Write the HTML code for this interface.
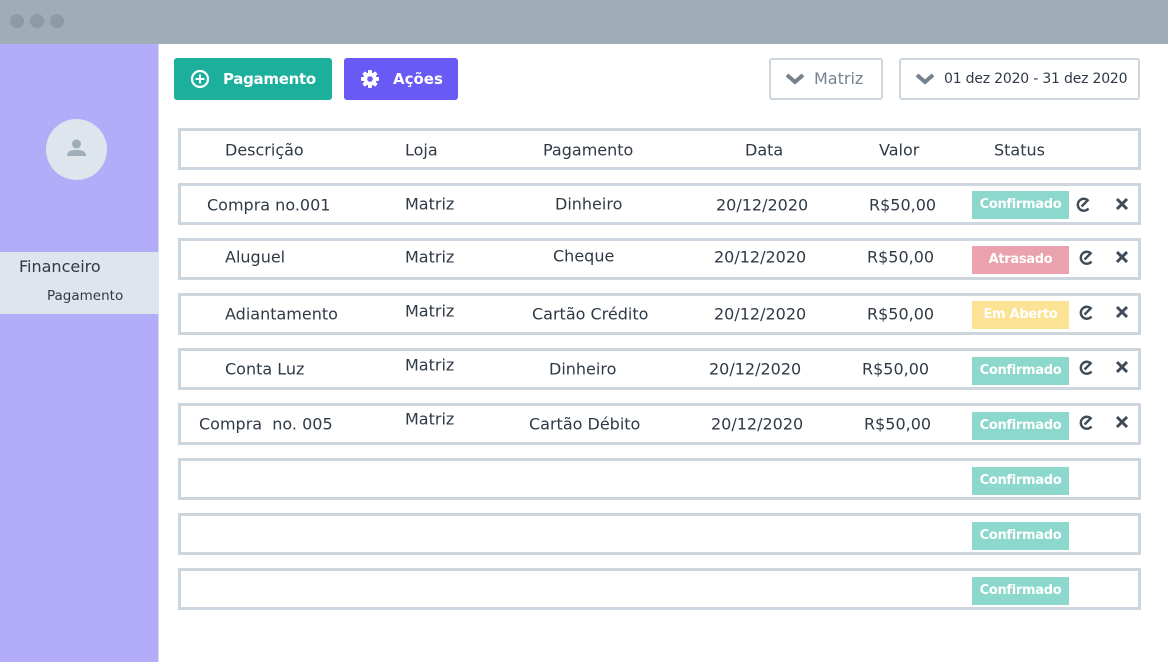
<!DOCTYPE html>
<html><head><meta charset="utf-8"><style>
*{margin:0;padding:0;box-sizing:border-box}
body{width:1168px;height:662px;position:relative;overflow:hidden;background:#fff;font-family:"DejaVu Sans","Liberation Sans",sans-serif;color:#2f3a46}
.top{position:absolute;left:0;top:0;width:1168px;height:44px;background:#9eadb8}
.dot{position:absolute;top:14px;width:14px;height:14px;border-radius:50%;background:#8c9ba6}
.side{position:absolute;left:0;top:44px;width:159px;height:618px;background:#b3acf9;border-right:1px solid #d8d6f5}
.av{position:absolute;left:46px;top:119px;width:61px;height:61px;border-radius:50%;background:#dfe5ec}
.menu{position:absolute;left:0;top:252px;width:159px;height:62px;background:#dfe5ec}
.btn{position:absolute;top:58px;height:42px;border-radius:3px;color:#fff;font-weight:bold;font-size:15px;line-height:42px}
.dd{position:absolute;top:58px;height:42px;border:2px solid #cdd5de;border-radius:3px;font-size:15px;line-height:38px}
.row{position:absolute;left:178px;width:963px;height:42px;border:3px solid #cdd5de}
.t{position:absolute;font-size:16px;white-space:nowrap;transform:translateY(-50%)}
.b{position:absolute;left:972px;width:97px;height:28px;color:#fff;font-weight:bold;font-size:13px;text-align:center;line-height:28px;letter-spacing:-0.3px}
.g{background:#8dd8cc}.r{background:#eaa2ae}.y{background:#fbe294}
</style></head><body>
<div class="top"><div class="dot" style="left:10px"></div><div class="dot" style="left:30px"></div><div class="dot" style="left:50px"></div></div>
<div class="side"></div>
<div class="av"><svg width="61" height="61" viewBox="0 0 61 61"><circle cx="30.5" cy="25" r="4.5" fill="#9eadb8"/><path d="M21 37c0-5 4-6 9.5-6s9.5 1 9.5 6z" fill="#9eadb8"/></svg></div>
<div class="menu"><div style="position:absolute;left:19px;top:5px;font-size:16px">Financeiro</div><div style="position:absolute;left:47px;top:36px;font-size:13.5px">Pagamento</div></div>

<div class="btn" style="left:174px;width:158px;background:#1caf9b"><svg style="position:absolute;left:16px;top:11px" width="20" height="20" viewBox="0 0 20 20"><circle cx="10" cy="10" r="8" fill="none" stroke="#fff" stroke-width="2.2"/><path d="M10 5.5v9M5.5 10h9" stroke="#fff" stroke-width="2"/></svg><span style="position:absolute;left:49px;letter-spacing:-0.3px">Pagamento</span></div>
<div class="btn" style="left:344px;width:114px;background:#6a5af5"><svg style="position:absolute;left:16px;top:11px" width="20" height="20" viewBox="0 0 20 20"><g fill="#fff"><circle cx="10" cy="10" r="6.5"/><rect x="8" y="1" width="4" height="18" rx="1"/><rect x="8" y="1" width="4" height="18" rx="1" transform="rotate(45 10 10)"/><rect x="8" y="1" width="4" height="18" rx="1" transform="rotate(90 10 10)"/><rect x="8" y="1" width="4" height="18" rx="1" transform="rotate(135 10 10)"/></g><circle cx="10" cy="10" r="2.8" fill="#6a5af5"/></svg><span style="position:absolute;left:49px">Ações</span></div>

<div class="dd" style="left:769px;width:114px;color:#76828d;font-size:16px"><svg style="position:absolute;left:14px;top:13px" width="20" height="12" viewBox="0 0 20 12"><path d="M2 2l8 7 8-7" fill="none" stroke="#76828d" stroke-width="4"/></svg><span style="position:absolute;left:43px">Matriz</span></div>
<div class="dd" style="left:899px;width:241px;font-size:14px;color:#2f3a46"><svg style="position:absolute;left:14px;top:13px" width="20" height="12" viewBox="0 0 20 12"><path d="M2 2l8 7 8-7" fill="none" stroke="#76828d" stroke-width="4"/></svg><span style="position:absolute;left:43px;letter-spacing:-0.2px">01 dez 2020 - 31 dez 2020</span></div>

<div class="row" style="top:128px"></div>
<div class="t" style="left:225px;top:150px">Descrição</div><div class="t" style="left:405px;top:150px">Loja</div><div class="t" style="left:543px;top:150px">Pagamento</div><div class="t" style="left:745px;top:150px">Data</div><div class="t" style="left:879px;top:150px">Valor</div><div class="t" style="left:994px;top:150px">Status</div>

<div class="row" style="top:183px"></div><div class="row" style="top:238px"></div><div class="row" style="top:293px"></div><div class="row" style="top:348px"></div><div class="row" style="top:403px"></div><div class="row" style="top:458px"></div><div class="row" style="top:513px"></div><div class="row" style="top:568px"></div>

<div class="t" style="left:207px;top:205px">Compra no.001</div><div class="t" style="left:405px;top:204px">Matriz</div><div class="t" style="left:555px;top:204px">Dinheiro</div><div class="t" style="left:716px;top:205px">20/12/2020</div><div class="t" style="left:869px;top:205px">R$50,00</div>
<div class="t" style="left:225px;top:257px">Aluguel</div><div class="t" style="left:405px;top:257px">Matriz</div><div class="t" style="left:553px;top:256px">Cheque</div><div class="t" style="left:714px;top:257px">20/12/2020</div><div class="t" style="left:867px;top:257px">R$50,00</div>
<div class="t" style="left:225px;top:314px">Adiantamento</div><div class="t" style="left:405px;top:311px">Matriz</div><div class="t" style="left:532px;top:314px">Cartão Crédito</div><div class="t" style="left:714px;top:314px">20/12/2020</div><div class="t" style="left:867px;top:314px">R$50,00</div>
<div class="t" style="left:225px;top:369px">Conta Luz</div><div class="t" style="left:405px;top:365px">Matriz</div><div class="t" style="left:549px;top:369px">Dinheiro</div><div class="t" style="left:709px;top:369px">20/12/2020</div><div class="t" style="left:862px;top:369px">R$50,00</div>
<div class="t" style="left:199px;top:424px">Compra&nbsp; no. 005</div><div class="t" style="left:405px;top:419px">Matriz</div><div class="t" style="left:529px;top:424px">Cartão Débito</div><div class="t" style="left:711px;top:424px">20/12/2020</div><div class="t" style="left:864px;top:424px">R$50,00</div>

<div class="b g" style="top:191px">Confirmado</div>
<div class="b r" style="top:246px">Atrasado</div>
<div class="b y" style="top:301px">Em Aberto</div>
<div class="b g" style="top:357px">Confirmado</div>
<div class="b g" style="top:412px">Confirmado</div>
<div class="b g" style="top:467px">Confirmado</div>
<div class="b g" style="top:522px">Confirmado</div>
<div class="b g" style="top:577px">Confirmado</div>

<svg style="position:absolute;left:0;top:0" width="1168" height="662">
<defs>
<g id="e"><path d="M5.5 -4A6 6 0 1 0 5.5 3.5" fill="none" stroke="#3f4c58" stroke-width="2.4"/><path d="M-1.5 1.5L5 -5" stroke="#3f4c58" stroke-width="2.4"/></g>
<g id="x"><path d="M-5 -5L5 5M5 -5L-5 5" stroke="#3f4c58" stroke-width="3"/></g>
</defs>
<use href="#e" x="1083" y="205"/><use href="#x" x="1122" y="204"/>
<use href="#e" x="1086" y="258"/><use href="#x" x="1122" y="257"/>
<use href="#e" x="1086" y="313"/><use href="#x" x="1122" y="312"/>
<use href="#e" x="1086" y="368"/><use href="#x" x="1122" y="367"/>
<use href="#e" x="1086" y="423"/><use href="#x" x="1122" y="422"/>
</svg>
</body></html>
